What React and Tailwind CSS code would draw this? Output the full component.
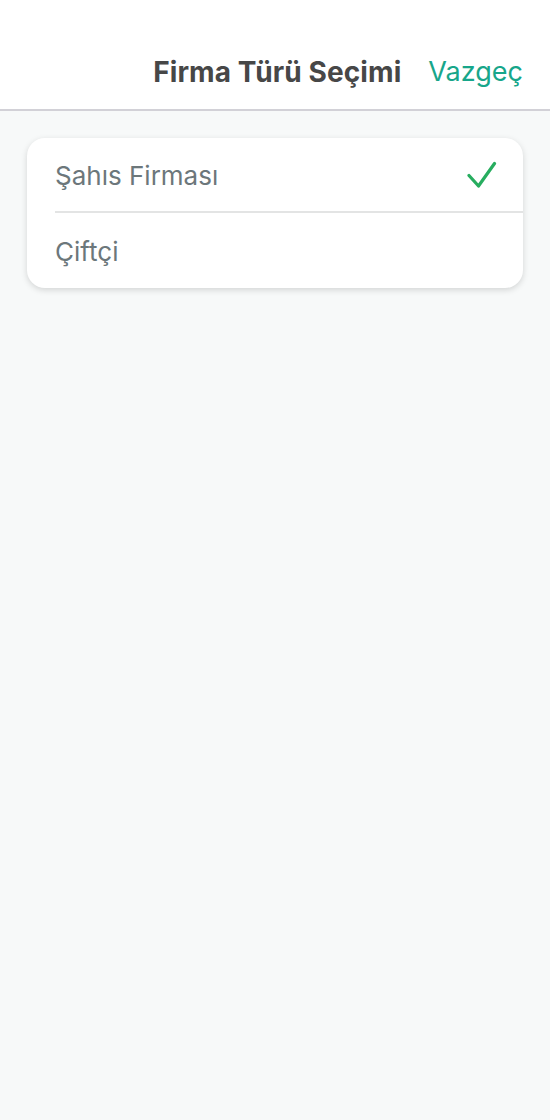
export default function App() {
  const options = [
    { label: 'Şahıs Firması', selected: true },
    { label: 'Çiftçi', selected: false },
  ]

  return (
    <div className="min-h-[1120px] bg-[#f7f9f9] font-['Inter','Roboto',sans-serif]">
      <header className="h-[111px] bg-white border-b-2 border-[#d2d1d7] flex items-end justify-end pb-[20px] pr-[27px] gap-[27px]">
        <h1 className="text-[28px] leading-[34px] font-bold text-[#474747] tracking-[0.1px]">Firma Türü Seçimi</h1>
        <button className="text-[27px] leading-[34px] text-[#17a68a]">Vazgeç</button>
      </header>

      <main className="pt-[27px] px-[27px]">
        <div className="bg-white rounded-[18px] shadow-[0_2px_6px_rgba(0,0,0,0.15)] overflow-hidden">
          {options.map((opt, i) => (
            <div key={opt.label} className="pl-[28px]">
              <div
                className={`h-[75px] flex items-center justify-between pr-[26px] pt-[2px] ${i < options.length - 1 ? 'border-b-2 border-[#e3e4e4]' : ''}`}
              >
                <span className="text-[26px] text-[#6c777b]">{opt.label}</span>
                {opt.selected && (
                  <svg width="30" height="30" viewBox="0 0 30 30" fill="none">
                    <path d="M2 14.5 L11.5 25 L27.5 2.5" stroke="#27ad5f" strokeWidth="3.2" strokeLinecap="round" strokeLinejoin="round" />
                  </svg>
                )}
              </div>
            </div>
          ))}
        </div>
      </main>
    </div>
  )
}
